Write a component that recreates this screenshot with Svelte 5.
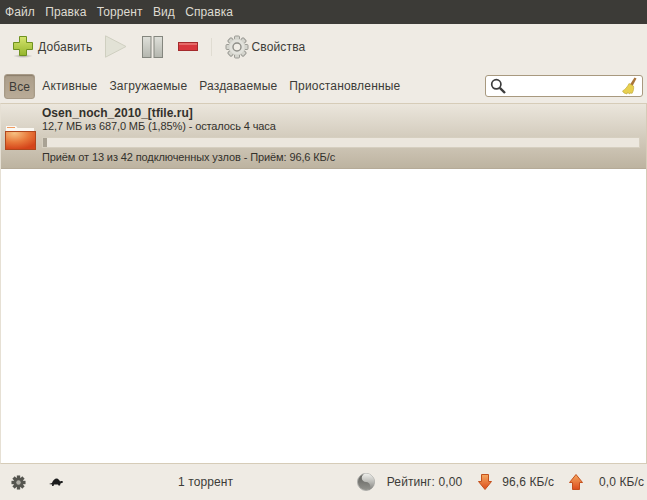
<script lang="ts">
  const menus = ["Файл", "Правка", "Торрент", "Вид", "Справка"];
  const filters = ["Все", "Активные", "Загружаемые", "Раздаваемые", "Приостановленные"];
  const teeth = [0, 45, 90, 135, 180, 225, 270, 315];
</script>

<div class="window">
  <nav class="menubar">
    {#each menus as m}
      <span class="menu-item">{m}</span>
    {/each}
  </nav>

  <div class="toolbar">
    <button class="tool add">
      <svg width="22" height="24" viewBox="0 0 22 24">
        <defs>
          <linearGradient id="plus" x1="0" y1="0" x2="0" y2="1">
            <stop offset="0" stop-color="#d6e56f" />
            <stop offset="1" stop-color="#94b52c" />
          </linearGradient>
          <radialGradient id="shade">
            <stop offset="0" stop-color="#000" stop-opacity=".3" />
            <stop offset="1" stop-color="#000" stop-opacity="0" />
          </radialGradient>
        </defs>
        <ellipse cx="11" cy="21" rx="10" ry="2" fill="url(#shade)" />
        <path d="M7.5 1.5h7v6h6v7h-6v6h-7v-6h-6v-7h6z" fill="url(#plus)" stroke="#6f9220" />
      </svg>
      <span>Добавить</span>
    </button>
    <svg class="play" width="22" height="23" viewBox="0 0 22 23">
      <path d="M.5.8 21 11.5.5 22.2z" fill="#e2e2d6" stroke="#cfcfc0" />
    </svg>
    <svg class="pause" width="21" height="22" viewBox="0 0 21 22">
      <defs>
        <linearGradient id="bar" x1="0" y1="0" x2="0" y2="1">
          <stop offset="0" stop-color="#dfe0da" />
          <stop offset="1" stop-color="#b4b6ae" />
        </linearGradient>
      </defs>
      <rect x=".5" y=".5" width="8.5" height="21" fill="url(#bar)" stroke="#84867e" />
      <rect x="12" y=".5" width="8.5" height="21" fill="url(#bar)" stroke="#84867e" />
    </svg>
    <svg class="remove" width="20" height="10" viewBox="0 0 20 10">
      <rect x=".5" y=".5" width="19" height="8" fill="#d8363c" stroke="#a42a2c" />
      <rect x="1" y="1" width="18" height="2" fill="#e66a68" />
    </svg>
    <div class="sep"></div>
    <button class="tool props">
      <svg width="24" height="24" viewBox="0 0 24 24">
        <g fill="#d4d4cd" stroke="#9a9a94" stroke-width="1">
          {#each teeth as a}
            <rect x="9.5" y="1" width="5" height="5" rx="1" transform="rotate({a} 12 12)" />
          {/each}
          <circle cx="12" cy="12" r="8.5" stroke="none" />
        </g>
        <circle cx="12" cy="12" r="7.5" fill="#e2e2dc" />
        <circle cx="12" cy="12" r="4" fill="#f0ede6" stroke="#8e8e88" stroke-width="1.4" />
      </svg>
      <span>Свойства</span>
    </button>
  </div>

  <div class="filterbar">
    {#each filters as f, i}
      <span class="filter" class:active={i === 0}>{f}</span>
    {/each}
    <div class="search">
      <svg width="16" height="16" viewBox="0 0 16 16">
        <circle cx="6.3" cy="6.3" r="4.6" fill="none" stroke="#3c3c3c" stroke-width="1.7" />
        <path d="M9.8 9.8 15 15" stroke="#3c3c3c" stroke-width="2.4" />
      </svg>
      <svg width="16" height="18" viewBox="0 0 16 18">
        <path d="M13.5 .5 15.5 1.500 11.500 9 9 7.500z" fill="#a8743a" />
        <path d="M8 6.500 12.500 9C13 11 12.500 14 11 16.500L9.500 15.500 9 17 6.500 15.500 6 17 3 16 1.500 14C4 12.500 6.500 10 8 6.500z" fill="#e8d050" stroke="#bca530" stroke-width=".6" />
      </svg>
    </div>
  </div>

  <main class="list">
    <div class="row">
      <svg class="folder" width="31" height="25" viewBox="0 0 31 25">
        <defs>
          <radialGradient id="fold" cx=".3" cy=".1" r=".9">
            <stop offset="0" stop-color="#f6c080" />
            <stop offset=".55" stop-color="#e8783a" />
            <stop offset="1" stop-color="#d4441a" />
          </radialGradient>
        </defs>
        <path d="M1 6.500V1h10l1.500 2H29V6.500z" fill="#faf8f3" />
        <rect x="2" y="2" width="8" height="1" fill="#ef9a60" />
        <rect x=".5" y="6.500" width="30" height="18" fill="url(#fold)" stroke="#b0461c" />
      </svg>
      <div class="info">
        <div class="name">Osen_noch_2010_[tfile.ru]</div>
        <div class="line">12,7 МБ из 687,0 МБ (1,85%) - осталось 4 часа</div>
        <div class="progress"><div class="fill"></div></div>
        <div class="line">Приём от 13 из 42 подключенных узлов - Приём: 96,6 КБ/с</div>
      </div>
    </div>
  </main>

  <footer class="statusbar">
    <svg class="cog" width="15" height="15" viewBox="0 0 16 16">
      {#each teeth as a}
        <rect x="6.200" y=".5" width="3.600" height="4" fill="#55554f" transform="rotate({a} 8 8)" />
      {/each}
      <circle cx="8" cy="8" r="5.400" fill="#55554f" />
      <circle cx="8" cy="8" r="2.400" fill="#b0aea6" />
    </svg>
    <svg class="turtle" width="14" height="9" viewBox="0 0 14 9">
      <path d="M0 6 3 5C4 2 6 .5 7.500 .5 9.500 .5 10.500 2.500 11 3.500L12 3h1.500L14 4.500 11.500 5.500 11 7.500H9.500L9 6.500H5L4.500 8H3L3.200 6.500z" fill="#1c1c1c" />
    </svg>
    <span class="count">1 торрент</span>
    <svg class="ratio" width="18" height="18" viewBox="0 0 19 19">
      <defs>
        <linearGradient id="yin" x1="0" y1="0" x2="0" y2="1">
          <stop offset="0" stop-color="#f0f0ec" />
          <stop offset=".55" stop-color="#b4b4b0" />
          <stop offset="1" stop-color="#7c7c78" />
        </linearGradient>
        <linearGradient id="yang" x1="0" y1="0" x2="0" y2="1">
          <stop offset="0" stop-color="#5c5c58" />
          <stop offset="1" stop-color="#94948f" />
        </linearGradient>
      </defs>
      <circle cx="9.500" cy="9.500" r="9" fill="url(#yang)" stroke="#b0b0ac" />
      <path d="M9.500 .5a9 9 0 0 1 0 18 4.500 4.500 0 0 0 0-9 4.500 4.500 0 0 1 0-9z" fill="url(#yin)" />
    </svg>
    <span class="ratio-text">Рейтинг: 0,00</span>
    <svg class="down" width="14" height="16" viewBox="0 0 14 16">
      <defs>
        <linearGradient id="arrow" x1="0" y1="0" x2="0" y2="1">
          <stop offset="0" stop-color="#f5a860" />
          <stop offset="1" stop-color="#dc4c1c" />
        </linearGradient>
      </defs>
      <path d="M3.500.5h7v7h3L7 15.500.5 7.500h3z" fill="url(#arrow)" stroke="#c4501c" />
    </svg>
    <span class="rate-down">96,6 КБ/с</span>
    <svg class="up" width="14" height="16" viewBox="0 0 14 16">
      <path d="M3.500 15.500h7v-7h3L7 .5.500 8.500h3z" fill="url(#arrow)" stroke="#c4501c" />
    </svg>
    <span class="rate-up">0,0 КБ/с</span>
  </footer>
</div>

<style>
  :global(body) {
    margin: 0;
  }
  .window {
    width: 647px;
    height: 500px;
    display: flex;
    flex-direction: column;
    background: #efebe4;
    font-family: "Liberation Sans", Arial, sans-serif;
    font-size: 12px;
    letter-spacing: 0.17px;
    color: #3c3b37;
    overflow: hidden;
  }
  .menubar {
    height: 24px;
    flex-shrink: 0;
    background: #3c3b37;
    display: flex;
    align-items: center;
    padding-left: 5px;
    gap: 10.2px;
    letter-spacing: 0.12px;
    color: #dfdbd2;
  }
  .toolbar {
    height: 45px;
    flex-shrink: 0;
    display: flex;
    align-items: center;
    padding-left: 12px;
    box-sizing: border-box;
  }
  .tool {
    display: flex;
    align-items: center;
    gap: 4px;
    border: 0;
    padding: 0;
    background: none;
    font: inherit;
    letter-spacing: inherit;
    color: inherit;
  }
  .play {
    margin-left: 13px;
  }
  .pause {
    margin-left: 15px;
  }
  .remove {
    margin-left: 15px;
  }
  .sep {
    width: 1px;
    height: 18px;
    background: #e0dcd2;
    margin-left: 13px;
  }
  .props {
    margin-left: 13px;
    gap: 2px;
  }
  .filterbar {
    height: 34px;
    flex-shrink: 0;
    display: flex;
    align-items: center;
    padding: 0 4px 0 4px;
    box-sizing: border-box;
  }
  .filter {
    margin-left: 12px;
  }
  .filter:first-child {
    margin-left: 0;
  }
  .filter.active {
    background: linear-gradient(#ab9d89, #b9ab97);
    border: 1px solid #a79a87;
    border-radius: 3px;
    padding: 3px 4px 2px 4px;
    line-height: 18px;
    margin-right: -5px;
    box-shadow: inset 0 1px 1px rgba(80, 70, 50, 0.35);
  }
  .search {
    margin-left: auto;
    width: 158px;
    height: 22px;
    box-sizing: border-box;
    border: 1px solid #a8997f;
    border-radius: 3px;
    background: #fff;
    display: flex;
    align-items: center;
    justify-content: space-between;
    padding: 0 5px 0 4px;
  }
  .list {
    flex: 1;
    background: #fff;
    border: 1px solid #d6ccb8;
    border-left-color: #e6e0d4;
    min-height: 0;
  }
  .row {
    height: 65px;
    box-sizing: border-box;
    background: linear-gradient(#ebe6dc, #bdb3a0);
    border-bottom: 1px solid #b5aa97;
    display: flex;
    align-items: flex-start;
    padding: 2px 6px 0 0;
    color: #33312c;
    font-size: 11px;
    letter-spacing: -0.11px;
  }
  .folder {
    margin: 19px 6px 0 4px;
    flex-shrink: 0;
  }
  .info {
    flex: 1;
    min-width: 0;
    display: flex;
    flex-direction: column;
  }
  .name {
    font-weight: bold;
    font-size: 12px;
    letter-spacing: 0.03px;
    line-height: 14px;
    margin-bottom: -1px;
  }
  .line {
    line-height: 14px;
  }
  .progress {
    height: 11px;
    margin: 4px 0 2px;
    background: #ece7de;
    border: 1px solid #d6cfc0;
    box-sizing: border-box;
  }
  .fill {
    height: 100%;
    width: 4px;
    background: #a9a294;
  }
  .statusbar {
    height: 36px;
    flex-shrink: 0;
    display: flex;
    align-items: center;
    padding: 0 3px 0 11px;
    box-sizing: border-box;
    letter-spacing: 0.1px;
  }
  .turtle {
    margin-left: 23px;
  }
  .count {
    margin-left: 115px;
  }
  .ratio {
    margin-left: auto;
  }
  .ratio-text {
    margin-left: 12px;
  }
  .down {
    margin-left: 16px;
  }
  .rate-down {
    margin-left: 10px;
  }
  .up {
    margin-left: 15px;
  }
  .rate-up {
    margin-left: 16px;
  }
</style>
